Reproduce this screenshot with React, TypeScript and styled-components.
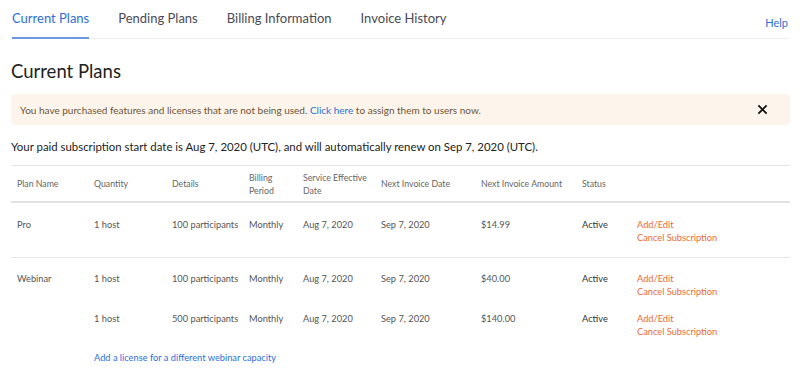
import React from "react";
import styled, { createGlobalStyle } from "styled-components";

const GlobalStyle = createGlobalStyle`
  body {
    margin: 0;
    background: #fff;
    font-family: Lato, "Open Sans", Arial, sans-serif;
  }
`;

const Page = styled.div`
  padding: 0 10px 0 11px;
  width: 800px;
  box-sizing: border-box;
`;

const TabBar = styled.div`
  display: flex;
  align-items: flex-end;
  border-bottom: 1px solid #eeeeee;
  height: 38px;
`;

const Tab = styled.div<{ $active?: boolean }>`
  font-size: 13px;
  color: ${(p) => (p.$active ? "#2d6fd6" : "#4a4a55")};
  padding: 0 0 10px;
  margin-left: ${(p) => (p.$active ? "1px" : "0")};
  margin-right: 29px;
  border-bottom: 2px solid ${(p) => (p.$active ? "#6d95e0" : "transparent")};
  margin-bottom: -1px;
  line-height: 17px;
`;

const Help = styled.a`
  margin-left: auto;
  font-size: 11px;
  color: #2d6fd6;
  margin-bottom: 9px;
  margin-right: 2px;
`;

const Title = styled.h1`
  font-size: 18.5px;
  font-weight: 400;
  color: #222;
  margin: 21px 0 12px;
  line-height: 22px;
`;

const Banner = styled.div`
  display: flex;
  align-items: center;
  justify-content: space-between;
  background: #fdf5ec;
  border-radius: 4px;
  height: 31px;
  padding: 0 22px 0 9px;
  font-size: 10px;
  color: #6b5436;
`;

const Link = styled.a`
  color: #2d6fd6;
`;

const Close = styled.svg`
  width: 11px;
  height: 11px;
`;

const Note = styled.p`
  font-size: 11.4px;
  color: #222;
  margin: 15px 0 11px;
  line-height: 14px;
`;

const Table = styled.div`
  border-top: 1px solid #e6e6e6;
`;

const cols = "77px 78px 77px 54px 78px 100px 101px 55px 1fr";

const HeadRow = styled.div`
  display: grid;
  grid-template-columns: ${cols};
  align-items: center;
  height: 35px;
  border-bottom: 2px solid #e2e2e2;
`;

const HeadCell = styled.div`
  font-size: 8.75px;
  color: #666;
  padding-left: 6px;
  line-height: 13px;
`;

const Group = styled.div<{ $last?: boolean }>`
  border-bottom: ${(p) => (p.$last ? "none" : "1px solid #e6e6e6")};
  padding: ${(p) => (p.$last ? "14px 0 0" : "15px 0 13px")};
`;

const Row = styled.div`
  display: grid;
  grid-template-columns: ${cols};
  align-items: start;
  & + & {
    margin-top: 14px;
  }
`;

const Cell = styled.div<{ $strong?: boolean }>`
  font-size: 9.25px;
  color: ${(p) => (p.$strong ? "#333" : "#555")};
  padding-left: 6px;
  line-height: 13px;
  white-space: nowrap;
`;

const Actions = styled.div`
  display: flex;
  flex-direction: column;
  padding-left: 6px;
  font-size: 9.25px;
  line-height: 13px;
  color: #ec6b33;
`;

const AddLink = styled.div`
  font-size: 9.25px;
  color: #2d6fd6;
  padding-left: 83px;
  margin-top: 13px;
  line-height: 13px;
`;

type Line = {
  plan?: string;
  qty: string;
  details: string;
  amount: string;
};

const groups: Line[][] = [
  [{ plan: "Pro", qty: "1 host", details: "100 participants", amount: "$14.99" }],
  [
    { plan: "Webinar", qty: "1 host", details: "100 participants", amount: "$40.00" },
    { qty: "1 host", details: "500 participants", amount: "$140.00" },
  ],
];

export default function App() {
  return (
    <>
      <GlobalStyle />
      <Page>
        <TabBar>
          <Tab $active>Current Plans</Tab>
          <Tab>Pending Plans</Tab>
          <Tab>Billing Information</Tab>
          <Tab>Invoice History</Tab>
          <Help>Help</Help>
        </TabBar>
        <Title>Current Plans</Title>
        <Banner>
          <span>
            You have purchased features and licenses that are not being used.{" "}
            <Link>Click here</Link> to assign them to users now.
          </span>
          <Close viewBox="0 0 12 12">
            <path d="M1.5 1.5 L10.5 10.5 M10.5 1.5 L1.5 10.5" stroke="#111" strokeWidth="2" />
          </Close>
        </Banner>
        <Note>
          Your paid subscription start date is Aug 7, 2020 (UTC), and will automatically renew on Sep 7,
          2020 (UTC).
        </Note>
        <Table>
          <HeadRow>
            <HeadCell>Plan Name</HeadCell>
            <HeadCell>Quantity</HeadCell>
            <HeadCell>Details</HeadCell>
            <HeadCell>
              Billing
              <br />
              Period
            </HeadCell>
            <HeadCell>
              Service Effective
              <br />
              Date
            </HeadCell>
            <HeadCell>Next Invoice Date</HeadCell>
            <HeadCell>Next Invoice Amount</HeadCell>
            <HeadCell>Status</HeadCell>
            <HeadCell />
          </HeadRow>
          {groups.map((g, gi) => (
            <Group key={gi} $last={gi === groups.length - 1}>
              {g.map((l, li) => (
                <Row key={li}>
                  <Cell>{l.plan ?? ""}</Cell>
                  <Cell>{l.qty}</Cell>
                  <Cell>{l.details}</Cell>
                  <Cell>Monthly</Cell>
                  <Cell>Aug 7, 2020</Cell>
                  <Cell>Sep 7, 2020</Cell>
                  <Cell>{l.amount}</Cell>
                  <Cell $strong>Active</Cell>
                  <Actions>
                    <span>Add/Edit</span>
                    <span>Cancel Subscription</span>
                  </Actions>
                </Row>
              ))}
              {gi === groups.length - 1 && <AddLink>Add a license for a different webinar capacity</AddLink>}
            </Group>
          ))}
        </Table>
      </Page>
    </>
  );
}
